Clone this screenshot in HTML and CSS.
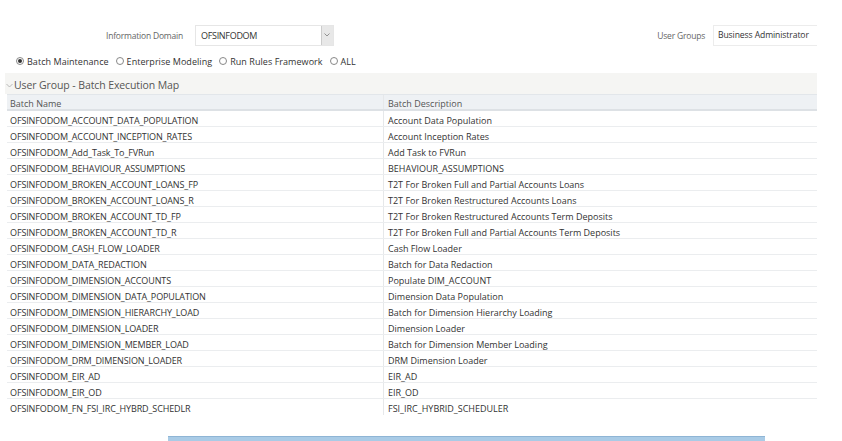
FILE: index.html
```html
<!DOCTYPE html>
<html>
<head>
<meta charset="utf-8">
<link rel="stylesheet" href="styles.css">
</head>
<body>
<div class="page">
  <div class="filters">
    <div class="field domain">
      <span class="label">Information Domain</span>
      <div class="select">
        <span class="value">OFSINFODOM</span>
        <span class="btn"><svg width="6" height="4" viewBox="0 0 6 4"><path d="M0.5 0.5 L3 3 L5.5 0.5" fill="none" stroke="#888" stroke-width="0.9"/></svg></span>
      </div>
    </div>
    <div class="field groups">
      <span class="label">User Groups</span>
      <div class="textbox">Business Administrator</div>
    </div>
  </div>
  <div class="radios">
    <label class="radio"><span class="dot checked"></span>Batch Maintenance</label>
    <label class="radio"><span class="dot"></span>Enterprise Modeling</label>
    <label class="radio"><span class="dot"></span>Run Rules Framework</label>
    <label class="radio"><span class="dot"></span>ALL</label>
  </div>
  <div class="panel">
    <div class="panel-head"><svg class="chev" width="7" height="5" viewBox="0 0 7 5"><path d="M0.5 1 L3.5 4 L6.5 1" fill="none" stroke="#aaa" stroke-width="0.8"/></svg>User Group - Batch Execution Map</div>
    <div class="table">
      <div class="row head"><div class="c1">Batch Name</div><div class="c2">Batch Description</div></div>
      <div class="row"><div class="c1">OFSINFODOM_ACCOUNT_DATA_POPULATION</div><div class="c2">Account Data Population</div></div>
      <div class="row"><div class="c1">OFSINFODOM_ACCOUNT_INCEPTION_RATES</div><div class="c2">Account Inception Rates</div></div>
      <div class="row"><div class="c1">OFSINFODOM_Add_Task_To_FVRun</div><div class="c2">Add Task to FVRun</div></div>
      <div class="row"><div class="c1">OFSINFODOM_BEHAVIOUR_ASSUMPTIONS</div><div class="c2">BEHAVIOUR_ASSUMPTIONS</div></div>
      <div class="row"><div class="c1">OFSINFODOM_BROKEN_ACCOUNT_LOANS_FP</div><div class="c2">T2T For Broken Full and Partial Accounts Loans</div></div>
      <div class="row"><div class="c1">OFSINFODOM_BROKEN_ACCOUNT_LOANS_R</div><div class="c2">T2T For Broken Restructured Accounts Loans</div></div>
      <div class="row"><div class="c1">OFSINFODOM_BROKEN_ACCOUNT_TD_FP</div><div class="c2">T2T For Broken Restructured Accounts Term Deposits</div></div>
      <div class="row"><div class="c1">OFSINFODOM_BROKEN_ACCOUNT_TD_R</div><div class="c2">T2T For Broken Full and Partial Accounts Term Deposits</div></div>
      <div class="row"><div class="c1">OFSINFODOM_CASH_FLOW_LOADER</div><div class="c2">Cash Flow Loader</div></div>
      <div class="row"><div class="c1">OFSINFODOM_DATA_REDACTION</div><div class="c2">Batch for Data Redaction</div></div>
      <div class="row"><div class="c1">OFSINFODOM_DIMENSION_ACCOUNTS</div><div class="c2">Populate DIM_ACCOUNT</div></div>
      <div class="row"><div class="c1">OFSINFODOM_DIMENSION_DATA_POPULATION</div><div class="c2">Dimension Data Population</div></div>
      <div class="row"><div class="c1">OFSINFODOM_DIMENSION_HIERARCHY_LOAD</div><div class="c2">Batch for Dimension Hierarchy Loading</div></div>
      <div class="row"><div class="c1">OFSINFODOM_DIMENSION_LOADER</div><div class="c2">Dimension Loader</div></div>
      <div class="row"><div class="c1">OFSINFODOM_DIMENSION_MEMBER_LOAD</div><div class="c2">Batch for Dimension Member Loading</div></div>
      <div class="row"><div class="c1">OFSINFODOM_DRM_DIMENSION_LOADER</div><div class="c2">DRM Dimension Loader</div></div>
      <div class="row"><div class="c1">OFSINFODOM_EIR_AD</div><div class="c2">EIR_AD</div></div>
      <div class="row"><div class="c1">OFSINFODOM_EIR_OD</div><div class="c2">EIR_OD</div></div>
      <div class="row last"><div class="c1">OFSINFODOM_FN_FSI_IRC_HYBRD_SCHEDLR</div><div class="c2">FSI_IRC_HYBRID_SCHEDULER</div></div>
    </div>
  </div>
  <div class="footer"><div class="bluebar"></div></div>
</div>
</body>
</html>
```
FILE: styles.css
```css
html, body {
  margin: 0;
  padding: 0;
  background: #fff;
}
body {
  font-family: "Open Sans", "Noto Sans", "DejaVu Sans", sans-serif;
  color: #333;
  font-size: 9px;
  width: 842px;
  height: 441px;
  overflow: hidden;
}
.page {
  display: flex;
  flex-direction: column;
  width: 842px;
}
.filters {
  display: flex;
  align-items: center;
  height: 22px;
  margin-top: 24px;
}
.field {
  display: flex;
  align-items: center;
}
.label {
  color: #666;
  font-size: 8.5px;
  letter-spacing: -0.2px;
}
.domain {
  margin-left: 106px;
}
.domain .label {
  margin-right: 12px;
}
.select {
  display: flex;
  align-items: stretch;
  width: 139px;
  height: 21px;
  border: 1px solid #e6e6e6;
  box-sizing: border-box;
  background: #fff;
}
.select .value {
  flex: 1;
  display: flex;
  align-items: center;
  padding-left: 5px;
  font-size: 9px;
  letter-spacing: -0.3px;
  color: #333;
}
.select .btn {
  width: 11px;
  background: #e8e8e8;
  border-left: 1px solid #ccc;
  display: flex;
  align-items: center;
  justify-content: center;
}
.groups {
  margin-left: auto;
  margin-right: 25px;
}
.groups .label {
  margin-right: 8px;
}
.textbox {
  width: 104px;
  height: 21px;
  box-sizing: border-box;
  border: 1px solid #ececec;
  border-right: none;
  display: flex;
  align-items: center;
  padding-left: 4px;
  font-size: 8.6px;
  letter-spacing: -0.1px;
  color: #333;
}
.radios {
  display: flex;
  align-items: center;
  margin-left: 16px;
  margin-top: 9px;
  height: 12px;
  gap: 7px;
}
.radio {
  display: flex;
  align-items: center;
  font-size: 9px;
  letter-spacing: 0.05px;
  color: #333;
}
.dot {
  width: 8px;
  height: 8px;
  border: 1px solid #888;
  border-radius: 50%;
  margin-right: 3px;
  box-sizing: border-box;
  position: relative;
  background: #fff;
}
.dot.checked::after {
  content: "";
  position: absolute;
  left: 1px;
  top: 1px;
  width: 4px;
  height: 4px;
  border-radius: 50%;
  background: #333;
}
.panel {
  margin-left: 5px;
  width: 812px;
  margin-top: 6px;
}
.panel-head {
  height: 21px;
  background: #f5f5f3;
  display: flex;
  align-items: center;
  padding-left: 1px;
  padding-top: 3px;
  box-sizing: border-box;
  font-size: 10.5px;
  color: #555;
  letter-spacing: -0.1px;
}
.chev {
  margin-right: 1px;
}
.table {
  display: flex;
  flex-direction: column;
  margin-left: 2px;
}
.row {
  display: flex;
  height: 16px;
  border-bottom: 1px solid #ebedef;
  box-sizing: border-box;
  align-items: center;
}
.row.head {
  background: #eef1f4;
  border-top: 1px solid #e2e6ea;
  border-bottom: 2px solid #dde1e5;
  height: 17px;
  color: #555;
}
.row.last {
  border-bottom: none;
}
.c1 {
  width: 377px;
  padding-left: 3px;
  padding-top: 3px;
  box-sizing: border-box;
  font-size: 9px;
  letter-spacing: -0.12px;
  height: 100%;
  display: flex;
  align-items: center;
  border-right: 1px solid #e6e8ea;
}
.c2 {
  flex: 1;
  padding-left: 4px;
  padding-top: 3px;
  box-sizing: border-box;
  font-size: 9px;
  letter-spacing: 0;
  height: 100%;
  display: flex;
  align-items: center;
}
.row.head .c1, .row.head .c2 {
  font-size: 9px;
  letter-spacing: 0;
}
.footer {
  margin-top: 21px;
  display: flex;
  padding-left: 168px;
}
.bluebar {
  width: 597px;
  height: 10px;
  background: #a9cbe6;
  border-top: 1px solid #8fb5d5;
  box-sizing: border-box;
}
```
